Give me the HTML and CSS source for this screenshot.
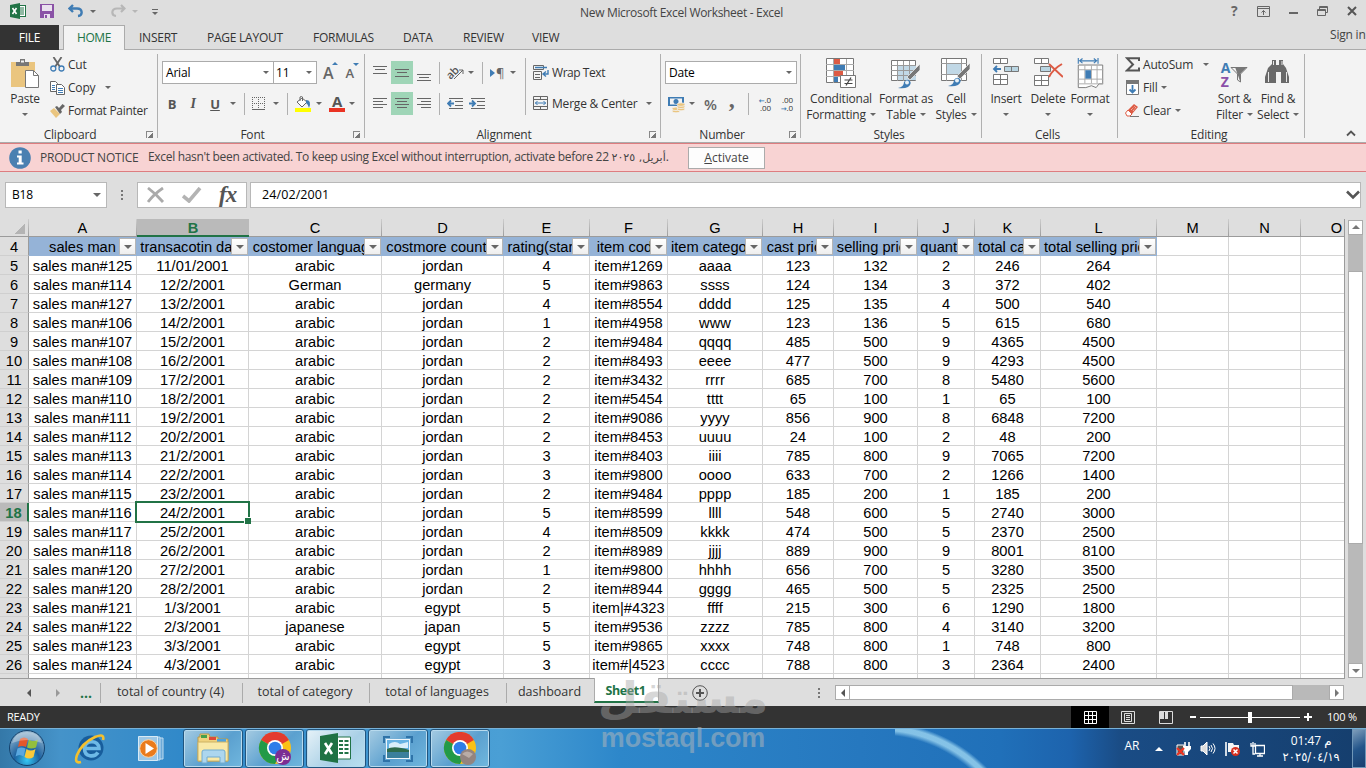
FILE: index.html
```html
<!doctype html>
<html lang="en">
  <head>
    <meta charset="UTF-8" />
    <meta name="viewport" content="width=device-width, initial-scale=1.0" />
    <title>New Microsoft Excel Worksheet - Excel</title>
    <link rel="stylesheet" href="styles.css">
  </head>
  <body>
    <div class="title-bar">
      <div class="quick-access">
        <svg class="qa-excel" width="16" height="16" viewBox="0 0 16 16">
          <rect x="8.5" y="2.5" width="7" height="11" fill="#fff" stroke="#217346" />
          <path d="M10 5h4M10 7h4M10 9h4M10 11h4" stroke="#217346" />
          <path d="M0 2l10-2v16L0 14z" fill="#217346" />
          <path d="M2.500 5l4 6M6.500 5l-4 6" stroke="#fff" stroke-width="1.6" />
        </svg>
        <svg class="qa-save" width="14" height="14" viewBox="0 0 14 14">
          <path d="M0 0h14v14H0z" fill="#8a52a6" />
          <path d="M2 1h10v6H2z" fill="#e9e1ee" />
          <path d="M4 10h6v4H4z" fill="#e9e1ee" />
          <path d="M5 11h2v3H5z" fill="#8a52a6" />
        </svg>
        <svg class="qa-undo" width="16" height="14" viewBox="0 0 16 14">
          <path d="M5 1L1.500 4.500L5 8M2 4.500h7c6 0 6 7 1 7.500" fill="none" stroke="#3f7cb4" stroke-width="2.400" />
        </svg>
        <i class="caret"></i>
        <svg class="qa-redo" width="16" height="14" viewBox="0 0 16 14">
          <path d="M11 1l3.500 3.500L11 8M14 4.500H7c-6 0-6 7-1 7.500" fill="none" stroke="#b7b7b7" stroke-width="2.200" />
        </svg>
        <i class="caret light"></i>
        <svg class="qa-more" width="6" height="7" viewBox="0 0 6 7">
          <path d="M0 .5h6" stroke="#666" />
          <path d="M0 3h6L3 6z" fill="#666" />
        </svg>
      </div>
      <div class="window-title">New Microsoft Excel Worksheet - Excel</div>
      <div class="window-buttons">
        <b>?</b>
        <svg width="13" height="11" viewBox="0 0 13 11" fill="none" stroke="#666">
          <path d="M.5.5h12v10H.5zM.5 2.500h12M6.500 9V4.500M4.500 6.500l2-2 2 2" />
        </svg>
        <svg width="9" height="11" viewBox="0 0 9 11"><path d="M0 7h9" stroke="#666" stroke-width="2" /></svg>
        <svg width="11" height="11" viewBox="0 0 11 11" fill="none" stroke="#666">
          <path d="M2.500 3V.5h8v6H8.500M.5 3.500h8v6h-8zM.5 4.500h8M2.500 1.500h8" />
        </svg>
        <svg width="10" height="10" viewBox="0 0 10 10"><path d="M1 1l8 8M9 1L1 9" stroke="#555" stroke-width="2" /></svg>
      </div>
    </div>

    <div class="tab-bar">
      <div class="tab file">FILE</div>
      <div class="tab active">HOME</div>
      <div class="tab insert">INSERT</div>
      <div class="tab layout">PAGE LAYOUT</div>
      <div class="tab formulas">FORMULAS</div>
      <div class="tab data">DATA</div>
      <div class="tab review">REVIEW</div>
      <div class="tab view">VIEW</div>
      <div class="sign-in">Sign in</div>
    </div>

    <div class="ribbon">
      <div class="group clipboard">
        <div class="group-body">
          <div class="big-button paste">
            <svg width="30" height="31" viewBox="0 0 30 31">
              <path d="M1 4h24v25H1z" fill="#eac57f" />
              <path d="M6 4h4V1h5v3h4v4H6z" fill="#777" />
              <path d="M11 2.500h3v2h-3z" fill="#f3f3f3" />
              <path d="M15.500 12.500h8l5 5v12h-13z" fill="#fff" stroke="#777" />
              <path d="M23.500 12.500v5h5" fill="none" stroke="#777" />
            </svg>
            <span>Paste</span>
            <i class="caret"></i>
          </div>
          <div class="stack">
            <div class="small-button">
              <svg width="15" height="15" viewBox="0 0 15 15" fill="none">
                <path d="M3.500 0L10 10M11.500 0L5 10" stroke="#666" stroke-width="1.800" />
                <circle cx="3.300" cy="11.500" r="2.500" stroke="#3f7cb4" stroke-width="1.300" />
                <circle cx="11.500" cy="11.500" r="2.500" stroke="#3f7cb4" stroke-width="1.300" />
              </svg>
              <span>Cut</span>
            </div>
            <div class="small-button">
              <svg width="15" height="14" viewBox="0 0 15 14">
                <path d="M.5.5h5l2 2v8h-7z" fill="#fff" stroke="#666" />
                <path d="M2 4.500h3M2 6.500h3M2 8.500h3" stroke="#3f7cb4" />
                <path d="M6.500 3.500h5l3 3v7h-8z" fill="#fff" stroke="#666" />
                <path d="M8 7.500h5M8 9.500h5M8 11.500h5" stroke="#3f7cb4" />
              </svg>
              <span class="copy-label">Copy</span><i class="caret"></i>
            </div>
            <div class="small-button">
              <svg width="15" height="14" viewBox="0 0 15 14">
                <path d="M0 7l4-3 6 6-4 4z" fill="#eac57f" />
                <path d="M5 3l2-1 2 2 3.500-4L15 2l-4 4 1 2-2 2z" fill="#666" />
              </svg>
              <span class="painter-label">Format Painter</span>
            </div>
          </div>
        </div>
        <div class="group-label"><span>Clipboard</span><i class="launcher"></i></div>
      </div>

      <div class="group font">
        <div class="group-body rows">
          <div class="tool-row">
            <div class="combo font-name"><span>Arial</span><i class="caret"></i></div>
            <div class="combo font-size"><span>11</span><i class="caret"></i></div>
            <div class="grow-font">A<i class="up"></i></div>
            <div class="shrink-font">A<i class="down"></i></div>
          </div>
          <div class="tool-row">
            <b class="tool bold">B</b>
            <b class="tool italic">I</b>
            <b class="tool underline">U</b>
            <i class="caret"></i>
            <i class="divider"></i>
            <svg class="borders" width="14" height="14" viewBox="0 0 14 14" stroke="#666" fill="none">
              <path d="M.5 0v13M6.500 0v13M12.500 0v13M0 .5h13M0 6.500h13" stroke-dasharray="1 1" />
              <path d="M0 12.500h13" />
            </svg>
            <i class="caret borders-caret"></i>
            <i class="divider"></i>
            <svg class="fill-color" width="17" height="16" viewBox="0 0 17 16">
              <path d="M2 6l5-4 5 4-5 5zM5 5V1q1.500-1 2.500 0v4" fill="#fff" stroke="#666" />
              <path d="M11 4q6 0 3 8-1-4-3-5z" fill="#3f7cb4" />
              <path d="M0 12h16v4H0z" fill="#ffff00" />
            </svg>
            <i class="caret"></i>
            <div class="font-color">A</div>
            <i class="caret"></i>
          </div>
        </div>
        <div class="group-label"><span>Font</span><i class="launcher"></i></div>
      </div>

      <div class="group alignment">
        <div class="group-body">
          <div class="align-left">
            <div class="tool-row">
              <i class="tool lines"><svg width="14" height="14" viewBox="0 0 14 14"><path d="M0 .5h14M2 3.500h10M0 7.500h14" /></svg></i>
              <i class="tool lines on"><svg width="14" height="14" viewBox="0 0 14 14"><path d="M0 3.500h14M2 6.500h10M0 10.500h14" /></svg></i>
              <i class="tool lines"><svg width="14" height="14" viewBox="0 0 14 14"><path d="M0 8.500h14M2 11.500h10M0 14.500h14" /></svg></i>
              <i class="divider"></i>
              <span class="orient">ab</span>
              <svg class="orient-arrow" width="10" height="14" viewBox="0 0 10 14" fill="none" stroke="#666"><path d="M0 13L9 4M5 4h4v4" /></svg>
              <i class="caret"></i>
              <i class="divider"></i>
              <span class="direction"><i></i>¶</span>
              <i class="caret"></i>
            </div>
            <div class="tool-row">
              <i class="tool lines"><svg width="14" height="14" viewBox="0 0 14 14"><path d="M0 1.500h14M0 4.500h10M0 7.500h14M0 10.500h10" /></svg></i>
              <i class="tool lines on"><svg width="14" height="14" viewBox="0 0 14 14"><path d="M0 1.500h14M2 4.500h10M0 7.500h14M2 10.500h10" /></svg></i>
              <i class="tool lines"><svg width="14" height="14" viewBox="0 0 14 14"><path d="M0 1.500h14M4 4.500h10M0 7.500h14M4 10.500h10" /></svg></i>
              <i class="divider"></i>
              <svg class="indent" width="16" height="11" viewBox="0 0 16 11">
                <path d="M2 .5h14M8 3.500h8M8 7.500h8M2 10.500h14" stroke="#666" />
                <path d="M7 5.500H1M4 2.500l-3 3 3 3" fill="none" stroke="#3f7cb4" stroke-width="1.800" />
              </svg>
              <svg class="indent" width="16" height="11" viewBox="0 0 16 11">
                <path d="M2 .5h14M8 3.500h8M8 7.500h8M2 10.500h14" stroke="#666" />
                <path d="M0 5.500h6M3 2.500l3 3-3 3" fill="none" stroke="#3f7cb4" stroke-width="1.800" />
              </svg>
            </div>
          </div>
          <div class="align-right">
            <div class="tool-row">
              <svg width="16" height="16" viewBox="0 0 16 16" fill="none" stroke="#666">
                <path d="M.5 4.500v-4h10v4zM.5 6.500h8v8h-8zM2 9.500h5M2 12.500h5" />
                <path d="M2 2.500h12M15 5v4h-4M13 6.500l-3 2.500 3 2.500" stroke="#3f7cb4" stroke-width="1.400" />
              </svg>
              <span class="wrap-label">Wrap Text</span>
            </div>
            <div class="tool-row">
              <svg width="16" height="15" viewBox="0 0 16 15" fill="none" stroke="#666">
                <path d="M.5.5h14v13H.5zM.5 3.500h14M.5 10.500h14M7.500 0v3M7.500 11v3" />
                <path d="M2 7h11M4.500 5L2.500 7l2 2M10.500 5l2 2-2 2" stroke="#3f7cb4" />
              </svg>
              <span class="merge-label">Merge &amp; Center</span><i class="caret"></i>
            </div>
          </div>
        </div>
        <div class="group-label"><span>Alignment</span><i class="launcher"></i></div>
      </div>

      <div class="group number">
        <div class="group-body rows">
          <div class="tool-row">
            <div class="combo number-format"><span>Date</span><i class="caret"></i></div>
          </div>
          <div class="tool-row">
            <svg class="money" width="17" height="16" viewBox="0 0 17 16">
              <path d="M0 0h16v9H0z" fill="#3f7cb4" />
              <path d="M2 1.500h12v6H2z" fill="#f3f3f3" />
              <circle cx="8" cy="4.500" r="2.500" fill="#3f7cb4" />
              <g fill="#eac57f" stroke="#f3f3f3" stroke-width=".8">
                <ellipse cx="8" cy="14" rx="4" ry="1.800" /><ellipse cx="8" cy="11.800" rx="4" ry="1.800" />
                <ellipse cx="13" cy="12" rx="4" ry="1.800" /><ellipse cx="13" cy="9.800" rx="4" ry="1.800" /><ellipse cx="13" cy="7.600" rx="4" ry="1.800" />
              </g>
            </svg>
            <i class="caret"></i>
            <span class="percent">%</span>
            <span class="comma">,</span>
            <i class="divider"></i>
            <div class="decimal more"><span><em>←</em>.0</span><span>.00</span></div>
            <div class="decimal less"><span>.00</span><span><em>→</em>.0</span></div>
          </div>
        </div>
        <div class="group-label"><span>Number</span><i class="launcher"></i></div>
      </div>

      <div class="group styles">
        <div class="group-body">
          <div class="big-button conditional">
            <svg width="30" height="31" viewBox="0 0 30 31">
              <path d="M.5.500h27v24H.5z" fill="#fff" stroke="#777" />
              <path d="M8 1h6v5H8zM8 13h9v5H8z" fill="#dd5b44" />
              <path d="M8 7h11v5H8zM8 19h4v5H8z" fill="#3f7cb4" />
              <path d="M7.500 1v24M20.500 1v24M0 6.500h28M0 12.500h28M0 18.500h28" stroke="#aaa" fill="none" />
              <path d="M14.500 17.500h15v12h-15z" fill="#fff" stroke="#777" />
              <path d="M18.500 22h8M18.500 25.500h8M25 19.500l-5 8" stroke="#444" stroke-width="1.200" />
            </svg>
            <span>Conditional</span>
            <span>Formatting<i class="caret"></i></span>
          </div>
          <div class="big-button format-table">
            <svg width="30" height="31" viewBox="0 0 30 31">
              <path d="M.5 2.500h24v20H.5z" fill="#fff" stroke="#777" />
              <path d="M7 8h18v14H7z" fill="#c1d8e6" />
              <path d="M6.500 3v20M12.500 3v20M18.500 3v20M0 7.500h25M0 12.500h25M0 17.500h25" stroke="#999" />
              <path d="M29 6v6l-10 10-3-3z" fill="#777" stroke="#f3f3f3" stroke-width=".7" />
              <path d="M7 30q6-1 6-6 3-4 6-1 2 3-2 6-4 2-10 1z" fill="#3f7cb4" />
              <circle cx="16" cy="24.500" r="2" fill="#e8f0f6" />
            </svg>
            <span>Format as</span>
            <span>Table<i class="caret"></i></span>
          </div>
          <div class="big-button cell-styles">
            <svg width="30" height="31" viewBox="0 0 30 31">
              <path d="M.5.500h25v22H.5z" fill="#fff" stroke="#777" />
              <path d="M5.500 1v22M20.500 1v22M0 5.500h26M0 16.500h26" stroke="#999" />
              <path d="M6 6h14v10H6z" fill="#c1d8e6" />
              <path d="M29 5v6l-10 10-3-3z" fill="#777" stroke="#f3f3f3" stroke-width=".7" />
              <path d="M7 28q6-1 6-6 3-4 6-1 2 3-2 6-4 2-10 1z" fill="#3f7cb4" />
              <circle cx="16" cy="22.500" r="2" fill="#e8f0f6" />
            </svg>
            <span>Cell</span>
            <span>Styles<i class="caret"></i></span>
          </div>
        </div>
        <div class="group-label"><span>Styles</span></div>
      </div>

      <div class="group cells">
        <div class="group-body">
          <div class="big-button">
            <svg width="28" height="31" viewBox="0 0 28 31">
              <path d="M1.500.500h14v5h-14zM8.500.500v5M1.500 16.500h14v10h-14zM8.500 16.500v10M1.500 21.500h14" fill="#fff" stroke="#777" />
              <path d="M12.500 8.500h14v5h-14zM19.500 8.500v5" fill="#b9d5e2" stroke="#777" />
              <path d="M9 11H2M5 8l-3 3 3 3" fill="none" stroke="#3f7cb4" stroke-width="1.800" />
            </svg>
            <span>Insert</span>
            <i class="caret"></i>
          </div>
          <div class="big-button">
            <svg width="30" height="31" viewBox="0 0 30 31">
              <path d="M1.500.500h14v5h-14zM8.500.500v5M1.500 17.500h14v10h-14zM8.500 17.500v10M1.500 22.500h14" fill="#fff" stroke="#777" />
              <path d="M7.500 8.500h10v5h-10z" fill="#b9d5e2" stroke="#777" />
              <path d="M16 6l14 13M29 6q-9 5-13 13" fill="none" stroke="#dd5b44" stroke-width="2" />
            </svg>
            <span>Delete</span>
            <i class="caret"></i>
          </div>
          <div class="big-button">
            <svg width="29" height="33" viewBox="0 0 29 33">
              <path d="M1.500 0v6M22.500 0v6M3 3h18M6 .500L3 3l3 2.500M18 .500L21 3l-3 2.500" fill="none" stroke="#3f7cb4" stroke-width="1.200" />
              <path d="M1.500 7.500h26v20h-4l-3 4-5-2-6 2h-8z" fill="#fff" stroke="#777" />
              <path d="M8.500 8v19M15.500 8v19M21.500 8v19M1 12.500h27M1 22.500h27M1 27.500h27" stroke="#aaa" />
              <path d="M9 13h6v9H9z" fill="#3f7cb4" />
            </svg>
            <span>Format</span>
            <i class="caret"></i>
          </div>
        </div>
        <div class="group-label"><span>Cells</span></div>
      </div>

      <div class="group editing">
        <div class="group-body">
          <div class="stack">
            <div class="small-button">
              <svg width="15" height="15" viewBox="0 0 15 15"><path d="M14 4V1.200H2L8 7.500 2 13.500h12V10.500" fill="none" stroke="#555" stroke-width="2" /></svg>
              <span class="autosum-label">AutoSum</span><i class="caret"></i>
            </div>
            <div class="small-button">
              <svg width="15" height="15" viewBox="0 0 15 15">
                <path d="M1.500.500h12v14h-12z" fill="#fff" stroke="#777" /><path d="M1 0h13v4H1z" fill="#777" />
                <path d="M7.500 5v8M4.500 9.500l3 3 3-3" fill="none" stroke="#3f7cb4" stroke-width="1.800" />
              </svg>
              <span>Fill</span><i class="caret"></i>
            </div>
            <div class="small-button">
              <svg width="15" height="14" viewBox="0 0 15 14">
                <path d="M5 12.500h9" stroke="#777" /><path d="M3 6l6-6 4 3-6 7z" fill="#dd5b44" /><path d="M3 6l4 4-2 2H2L.5 9z" fill="#fff" stroke="#dd5b44" />
                <path d="M6 6l4-4M8 7l3-4" stroke="#f6cfc7" stroke-dasharray="1 1" />
              </svg>
              <span>Clear</span><i class="caret"></i>
            </div>
          </div>
          <div class="big-button sort">
            <div class="sort-icon">
              <div class="az"><b>A</b><b>Z</b></div>
              <svg width="18" height="17" viewBox="0 0 18 17"><path d="M1 1.500h16L10.500 8v8l-3-2V8z" fill="#f3f3f3" stroke="#777" /><path d="M5 1h12l-7 7v7z" fill="#777" /></svg>
            </div>
            <span>Sort &amp;</span>
            <span>Filter<i class="caret"></i></span>
          </div>
          <div class="big-button find">
            <svg width="28" height="31" viewBox="0 0 28 31" fill="#6a6a6a">
              <path d="M8 2h4v5h3V2h4v4l3 4 3 9v6h-8V14h-5v11H1v-6l3-9 4-4z" />
              <path d="M4.500 14v10M22.500 14v10M9.500 3v4M18 3v4" stroke="#e8e8e8" />
            </svg>
            <span>Find &amp;</span>
            <span>Select<i class="caret"></i></span>
          </div>
        </div>
        <div class="group-label"><span>Editing</span></div>
      </div>
      <svg class="collapse" width="10" height="7" viewBox="0 0 10 7"><path d="M1 5.500l4-4 4 4" fill="none" stroke="#555" stroke-width="1.800" /></svg>
    </div>

    <div class="notice">
      <svg width="22" height="22" viewBox="0 0 22 22">
        <circle cx="11" cy="11" r="10.800" fill="#4a80b1" />
        <path d="M9.500 3.500h3.200v3H9.500zM8 8.500h4.700v7H14.500v2H8v-2h1.700v-5H8z" fill="#fff" />
      </svg>
      <span class="notice-title">PRODUCT NOTICE</span>
      <span class="notice-text">Excel hasn't been activated. To keep using Excel without interruption, activate before 22 <span class="arabic">أبريل, ٢٠٢٥</span>.</span>
      <button><u>A</u>ctivate</button>
    </div>

    <div class="formula-bar">
      <div class="name-box"><span>B18</span><i class="caret"></i></div>
      <div class="dots"><i></i><i></i><i></i></div>
      <div class="formula-buttons">
        <svg width="18" height="16" viewBox="0 0 18 16"><path d="M1 1q8 6 15 14M16 1Q7 7 1 15" fill="none" stroke="#aaa" stroke-width="2.800" /></svg>
        <svg width="20" height="16" viewBox="0 0 20 16"><path d="M1 9l6 5L18 1" fill="none" stroke="#b3b3b3" stroke-width="3.600" /></svg>
        <span class="fx">fx</span>
      </div>
      <div class="formula-input">
        <span>24/02/2001</span>
        <svg width="14" height="10" viewBox="0 0 14 10"><path d="M1 1.500l6 6 6-6" fill="none" stroke="#555" stroke-width="2.600" /></svg>
      </div>
    </div>

    <div class="sheet">
      <div class="grid" id="grid"></div>
      <div class="v-scroll">
        <div class="scroll-button"><i class="arrow-up"></i></div>
        <div class="v-thumb"></div>
        <div class="scroll-button"><i class="arrow-down"></i></div>
      </div>
    </div>

    <div class="sheet-tabs">
      <i class="arrow-left"></i>
      <i class="arrow-right"></i>
      <b class="more-sheets">...</b>
      <div class="sheet-tab country">total of country (4)</div>
      <div class="sheet-tab category">total of category</div>
      <div class="sheet-tab languages">total of languages</div>
      <div class="sheet-tab dashboard">dashboard</div>
      <div class="sheet-tab selected">Sheet1</div>
      <svg class="add-sheet" width="16" height="16" viewBox="0 0 16 16" fill="none" stroke="#555">
        <circle cx="8" cy="8" r="7.300" /><path d="M4 8h8M8 4v8" stroke-width="2" />
      </svg>
      <div class="dots"><i></i><i></i><i></i></div>
      <div class="h-scroll">
        <div class="scroll-button"><i class="arrow-left"></i></div>
        <div class="h-thumb"></div>
        <div class="scroll-button"><i class="arrow-right"></i></div>
      </div>
    </div>

    <div class="status-bar">
      <span class="ready">READY</span>
      <div class="view-button on"><svg width="13" height="13" viewBox="0 0 13 13" fill="none" stroke="#fff"><path d="M.5.500h12v12H.5zM4.500 0v13M8.500 0v13M0 4.500h13M0 8.500h13" /></svg></div>
      <div class="view-button"><svg width="14" height="13" viewBox="0 0 14 13" fill="none" stroke="#ddd"><path d="M.5.500h13v12H.5zM3.500 2.500h7v8h-7zM5 4.500h4M5 6.500h4M5 8.500h4" /></svg></div>
      <div class="view-button"><svg width="14" height="13" viewBox="0 0 14 13"><path d="M.5.500h13v12H.5z" fill="none" stroke="#ddd" /><path d="M1 1h4v7H1zM6 1h3v7H6z" fill="#ddd" /></svg></div>
      <i class="minus"></i>
      <div class="zoom-track"><i></i></div>
      <svg class="plus" width="8" height="8" viewBox="0 0 8 8"><path d="M0 4h8M4 0v8" stroke="#fff" stroke-width="2" /></svg>
      <span class="zoom-value">100 %</span>
    </div>

    <div class="taskbar">
      <svg class="start" width="38" height="38" viewBox="0 0 38 38">
        <defs>
          <radialGradient id="orb" cx=".5" cy=".85" r=".8">
            <stop offset="0" stop-color="#35c8f5" /><stop offset=".45" stop-color="#1d62a0" /><stop offset="1" stop-color="#8fb2cc" />
          </radialGradient>
        </defs>
        <circle cx="19" cy="19" r="17.500" fill="url(#orb)" stroke="#12406b" />
        <path d="M12 10q4-3 8 0l-2 8q-4-2-8 0z" fill="#e4572a" />
        <path d="M21 10.500q4 3 9 0l-2 8q-5 2-9 0z" fill="#93bf3e" />
        <path d="M9.500 19.500q4-2 8 0l-2 8q-4-3-8 0z" fill="#5aa7df" />
        <path d="M18.500 20q4 3 9 0l-2 8q-4 3-9 0z" fill="#f9c93a" />
        <path d="M4 14q3-11 15-11t15 11q-15-6-30 0z" fill="#fff" opacity=".3" />
      </svg>
      <svg class="ie" width="34" height="34" viewBox="0 0 34 34" fill="none">
        <circle cx="18" cy="17" r="12.500" fill="#175d9c" />
        <path d="M11 17.500h15c0-9-14-9-14.500 0 0 9 10 9 13.500 4" stroke="#6db9e6" stroke-width="3.600" />
        <path d="M30 9q2-7-8-3Q9 12 4 24q-3 9 4 7" stroke="#f3c02f" stroke-width="2.600" />
      </svg>
      <svg class="wmp" width="28" height="26" viewBox="0 0 28 26">
        <path d="M7 2h18v21H7z" fill="#6ba9d8" stroke="#bfdcf0" /><path d="M4 1h18v23H4z" fill="#7cb4de" stroke="#bfdcf0" />
        <path d="M.5.500h19v24H.5z" fill="#9cc7e6" stroke="#d7eaf6" />
        <circle cx="10.500" cy="12.500" r="8.800" fill="#ea7b1c" stroke="#f9d3a6" /><path d="M7.500 7l8.500 5.500L7.500 18z" fill="#fff" />
      </svg>
      <div class="task explorer">
        <svg width="34" height="32" viewBox="0 0 34 32">
          <path d="M2 4h2V1h9l1 3h8v2h10v22H2z" fill="#f0d27d" stroke="#b99a4b" />
          <path d="M5 2h6v3H5z" fill="#46a04a" /><path d="M13 4h7v3h-7z" fill="#dd4a38" /><path d="M21 6h9v3h-9z" fill="#4ea3dd" />
          <path d="M2 9h30v19H2z" fill="#f9e9a7" stroke="#cdb264" />
          <path d="M6 30V19q0-2 2-2h19q2 0 2 2v11h-5v-6H11v6z" fill="#acd6ee" stroke="#72acd0" />
        </svg>
      </div>
      <div class="task">
        <svg width="34" height="34" viewBox="0 0 34 34">
          <circle cx="17" cy="16" r="16" fill="#fbc116" />
          <path d="M17 16L3.100 8A16 16 0 0 1 30.900 8z" fill="#e33b2e" />
          <path d="M17 16L3.100 8A16 16 0 0 0 17 32l6-11z" fill="#229a48" />
          <circle cx="17" cy="16" r="8" fill="#fff" /><circle cx="17" cy="16" r="6.300" fill="#2f7de9" />
          <circle cx="25" cy="25" r="8" fill="#7b2d93" />
          <text x="25" y="28" class="profile-letter">ش</text>
        </svg>
      </div>
      <div class="task current">
        <svg width="32" height="32" viewBox="0 0 32 32">
          <path d="M16 4h14.500v22H16z" fill="#fff" stroke="#217346" />
          <path d="M19 8h4M19 12h4M19 16h4M19 20h4M24.500 8h4M24.500 12h4M24.500 16h4M24.500 20h4" stroke="#217346" stroke-width="2" />
          <path d="M0 3l18-3v30L0 27z" fill="#1f7244" /><path d="M5 10l7 11M12 10L5 21" stroke="#fff" stroke-width="2.600" />
        </svg>
      </div>
      <div class="task">
        <svg width="30" height="26" viewBox="0 0 30 26">
          <path d="M1 7V1h6M23 1h6v6M29 19v6h-6M7 25H1v-6" fill="none" stroke="#2f73a8" stroke-width="2" />
          <path d="M3 3h24v20H3z" fill="#eef5fa" /><path d="M4 4h22v10H4z" fill="#67b2e3" /><path d="M6 8q6-4 11 0l8-2v6H6z" fill="#d9eefa" />
          <path d="M4 13q7-4 22 1v4H4z" fill="#2e6b4c" /><path d="M4 16h22v6H4z" fill="#3b7f9c" />
        </svg>
      </div>
      <div class="task">
        <svg width="34" height="34" viewBox="0 0 34 34">
          <circle cx="17" cy="16" r="16" fill="#fbc116" />
          <path d="M17 16L3.100 8A16 16 0 0 1 30.900 8z" fill="#e33b2e" />
          <path d="M17 16L3.100 8A16 16 0 0 0 17 32l6-11z" fill="#229a48" />
          <circle cx="17" cy="16" r="8" fill="#fff" /><circle cx="17" cy="16" r="6.300" fill="#2f7de9" />
          <circle cx="25" cy="25" r="8" fill="#93847f" /><path d="M19 22q5-5 11 0l-4 4z" fill="#b9aca6" />
        </svg>
      </div>
      <span class="language">AR</span>
      <i class="tray-arrow"></i>
      <div class="tray">
        <svg width="15" height="16" viewBox="0 0 15 16">
          <path d="M1 4h7v10H1z" fill="#555" stroke="#fff" /><path d="M9 1v4M13 1v4" stroke="#fff" stroke-width="1.600" /><path d="M7 5h8v3l-3 3v3H9v-3L7 8z" fill="#fff" />
          <path d="M1 7l7 7M8 7l-7 7" stroke="#e32" stroke-width="2.200" />
        </svg>
        <svg width="16" height="16" viewBox="0 0 16 16" fill="none" stroke="#fff">
          <path d="M1 5h2l4-4v13l-4-4H1z" fill="#ddd" /><path d="M9 5q2 2.500 0 5M11 4q3 3.500 0 7M13 2.500q4 5 0 10" />
        </svg>
        <svg width="16" height="16" viewBox="0 0 16 16">
          <path d="M1 1v14" stroke="#fff" stroke-width="1.600" /><path d="M3 2h5l1 2h5v7H3z" fill="#f5f5f5" />
          <circle cx="10.500" cy="10.500" r="4.500" fill="#d8301f" /><path d="M8.500 8.500l4 4M12.500 8.500l-4 4" stroke="#fff" stroke-width="1.500" />
        </svg>
        <svg width="15" height="15" viewBox="0 0 15 15" fill="none" stroke="#fff">
          <path d="M5.500 3.500h9v8h-9zM7 14h6M10 12v2" stroke-width="1.300" /><path d="M1 1v3h4V1M3 0v12h2" stroke-width="1.300" />
        </svg>
      </div>
      <div class="clock"><span>01:47 م</span><span class="arabic">٢٠٢٥/٠٤/١٩</span></div>
      <div class="show-desktop"></div>
    </div>

    <div class="watermark">
      <span class="mark-ar" lang="ar">مستقل</span>
      <span class="mark-en">mostaql.com</span>
    </div>

    <script src="script.js"></script>
  </body>
</html>
```
FILE: styles.css
```css
* {
  box-sizing: border-box;
}

body {
  width: 1366px;
  height: 768px;
  margin: 0;
  overflow: hidden;
  position: relative;
  background: #dedede;
  color: #333;
  font-family: "Open Sans", "Noto Sans", "DejaVu Sans", sans-serif;
  font-size: 12px;
  line-height: 16px;
  letter-spacing: -0.2px;
  white-space: nowrap;
}

svg {
  display: block;
  flex: none;
}

.arabic {
  font-family: "DejaVu Sans", sans-serif;
  font-size: 11px;
}

.caret {
  flex: none;
  width: 0;
  height: 0;
  border: 3px solid transparent;
  border-top-color: #666;
  border-bottom: 0;
}

.caret.light {
  border-top-color: #b7b7b7;
}

/* title bar */

.title-bar {
  display: flex;
  height: 25px;
}

.quick-access {
  display: flex;
  align-items: center;
  width: 580px;
  height: 22px;
  padding-left: 10px;
}

.qa-save {
  margin-left: 14px;
}

.qa-undo {
  margin: 0 6px 0 14px;
}

.qa-redo {
  margin: 0 6px 0 14px;
}

.qa-more {
  margin: 3px 0 0 14px;
}

.window-title {
  width: 640px;
  padding-top: 5px;
  color: #444;
  letter-spacing: -0.32px;
}

.window-buttons {
  display: flex;
  align-items: center;
  gap: 19px;
  height: 22px;
  padding-left: 11px;
  color: #666;
}

.window-buttons b {
  width: 7px;
  font-size: 14px;
}

.tab-bar {
  display: flex;
  height: 25px;
  border-bottom: 1px solid #ababab;
  line-height: 25px;
  letter-spacing: -0.25px;
}

.tab.file {
  width: 59px;
  height: 25px;
  background: #333;
  color: #fff;
  text-align: center;
}

.tab.active {
  width: 62px;
  height: 25px;
  margin-left: 4px;
  border: 1px solid #ababab;
  border-bottom: 0;
  background: #f3f3f3;
  color: #217346;
  text-align: center;
  line-height: 24px;
  letter-spacing: -0.4px;
}

.tab.insert {
  width: 67px;
  padding-left: 14px;
}

.tab.layout {
  width: 106px;
  padding-left: 15px;
}

.tab.formulas {
  width: 90px;
  padding-left: 15px;
}

.tab.data {
  width: 60px;
  padding-left: 15px;
}

.tab.review {
  width: 69px;
  padding-left: 15px;
}

.tab.view {
  width: 813px;
  padding-left: 15px;
}

.sign-in {
  line-height: 20px;
  color: #444;
  letter-spacing: -0.2px;
}

/* ribbon */

.ribbon {
  display: flex;
  height: 93px;
  border-bottom: 1px solid #ababab;
  background: #f3f3f3;
}

.group {
  height: 84px;
  margin-top: 4px;
  border-right: 1px solid #b0b0b0;
}

.group-body {
  display: flex;
  height: 72px;
}

.group-body.rows {
  display: block;
}

.group-label {
  display: flex;
  align-items: center;
  height: 17px;
  padding-right: 4px;
}

.group-label span {
  flex: 1;
  padding-right: 6px;
  text-align: center;
}

.launcher {
  width: 7px;
  height: 7px;
  border: 1px solid #888;
  border-width: 1px 0 0 1px;
  background: linear-gradient(135deg, transparent 55%, #777 55%);
}

.clipboard {
  width: 158px;
}

.font {
  width: 207px;
}

.alignment {
  width: 296px;
}

.number {
  width: 140px;
}

.styles {
  width: 181px;
}

.styles .group-label span,
.cells .group-label span,
.editing .group-label span {
  padding-right: 0;
}

.cells {
  width: 136px;
}

.editing {
  width: 187px;
}

.big-button {
  display: flex;
  flex-direction: column;
  align-items: center;
  padding-top: 4px;
}

.big-button > svg {
  height: 31px;
  margin-bottom: 2px;
}

.big-button > .caret {
  margin-top: 6px;
}

.big-button span .caret {
  display: inline-block;
  margin: 0 0 3px 4px;
}

.paste {
  width: 50px;
}

.stack {
  display: flex;
  flex-direction: column;
  margin-top: -1px;
}

.small-button {
  display: flex;
  align-items: center;
  height: 23px;
}

.small-button span {
  margin: 0 5px 0 3px;
}

.clipboard .small-button .caret {
  margin-left: 5px;
}

.painter-label {
  letter-spacing: -0.3px;
}

.tool-row {
  display: flex;
  align-items: center;
  height: 25px;
}

.rows .tool-row:first-child,
.align-left .tool-row:first-child,
.align-right .tool-row:first-child {
  height: 37px;
}

.rows .tool-row,
.align-left {
  padding-left: 4px;
}

.combo {
  display: flex;
  align-items: center;
  justify-content: space-between;
  height: 23px;
  padding: 0 4px 0 3px;
  border: 1px solid #ababab;
  background: #fff;
  color: #000;
}

.font-name {
  width: 112px;
}

.font-size {
  width: 44px;
  margin-left: -1px;
  padding-left: 2px;
}

.number-format {
  width: 132px;
}

.grow-font,
.shrink-font {
  position: relative;
  margin-left: 6px;
  color: #666;
  font-size: 16px;
  font-weight: 600;
}

.shrink-font {
  margin-left: 12px;
  font-size: 13px;
}

.grow-font i,
.shrink-font i {
  position: absolute;
  top: -2px;
  right: -5px;
  border: 3px solid transparent;
}

.grow-font .up {
  top: -6px;
  border-bottom-color: #3f7cb4;
}

.shrink-font .down {
  border-top-color: #3f7cb4;
}

.font b.tool {
  width: 22px;
  color: #555;
  font-size: 13px;
  text-align: center;
}

.font b.bold {
  width: 20px;
}

.font b.italic {
  font-family: "Liberation Serif", serif;
  font-size: 14px;
  font-style: italic;
}

.underline {
  text-decoration: underline;
}

.font .caret {
  margin-left: 4px;
}

.font .combo .caret {
  margin-left: 0;
}

.font .borders-caret {
  margin-left: 7px;
}

.divider {
  flex: none;
  width: 1px;
  height: 22px;
  margin: 0 7px 0 8px;
  background: #b0b0b0;
}

.font-color {
  width: 16px;
  height: 16px;
  margin-left: 7px;
  border-bottom: 4px solid #ea3323;
  color: #555;
  font-size: 15px;
  font-weight: 700;
  line-height: 11px;
  text-align: center;
}

.align-left {
  width: 160px;
  height: 62px;
}

.lines {
  display: flex;
  align-items: center;
  justify-content: center;
  width: 22px;
  height: 23px;
}

.lines svg {
  overflow: visible;
}

.lines path {
  stroke: #666;
}

.lines.on {
  background: #9fd5b7;
}

.align-left .lines + .divider {
  margin-left: 4px;
}

.orient {
  width: 12px;
  margin-left: -1px;
  color: #555;
  font-size: 11px;
  font-weight: 600;
  transform: rotate(-45deg);
}

.orient-arrow {
  margin: 0 4px 0 -4px;
}

.direction {
  display: flex;
  align-items: center;
  gap: 1px;
  margin-right: 6px;
  color: #666;
  font-size: 13px;
}

.direction i {
  border: 4px solid transparent;
  border-left: 5px solid #3f7cb4;
  border-right: 0;
}

.indent + .indent {
  margin-left: 6px;
}

.align-right {
  width: 135px;
  height: 57px;
  margin-top: 4px;
  padding-left: 7px;
  border-left: 1px solid #b0b0b0;
}

.align-right .tool-row {
  margin-top: -4px;
}

.align-right .tool-row + .tool-row {
  margin-top: 0;
}

.align-right span {
  margin-left: 3px;
}

.align-right .wrap-label {
  letter-spacing: -0.45px;
}

.align-right .caret {
  margin-left: 9px;
}

.money {
  margin: 2px 4px 0 3px;
}

.percent {
  margin-left: 9px;
  color: #666;
  font-size: 15px;
  font-weight: 600;
}

.comma {
  width: 6px;
  margin: -10px 5px 0 12px;
  color: #666;
  font-family: "Liberation Serif", serif;
  font-size: 24px;
  font-weight: 700;
}

.decimal {
  width: 15px;
  font-size: 8px;
  line-height: 8px;
  text-align: right;
}

.decimal span {
  display: block;
  height: 8px;
  letter-spacing: -0.2px;
}

.decimal em {
  color: #3f7cb4;
  font-family: "DejaVu Sans", sans-serif;
  font-size: 7px;
  font-style: normal;
  font-weight: 700;
  line-height: 6px;
}

.decimal.less {
  margin-left: 7px;
}

.conditional {
  width: 80px;
}

.format-table {
  width: 50px;
}

.cell-styles {
  width: 50px;
}

.cells .group-body {
  padding-left: 3px;
}

.cells .big-button {
  width: 42px;
}

.editing .stack {
  width: 93px;
  padding-left: 7px;
}

.editing .stack .caret {
  margin-left: -1px;
}

.editing .autosum-label + .caret {
  margin-left: 5px;
}

.sort {
  width: 47px;
}

.find {
  width: 40px;
}

.sort-icon {
  display: flex;
  align-items: center;
  height: 33px;
}

.az {
  display: flex;
  flex-direction: column;
  color: #3f7cb4;
  font-size: 14px;
  line-height: 14px;
}

.az b + b {
  color: #8b4fa8;
}

.collapse {
  align-self: flex-end;
  margin: 0 0 5px 41px;
}

/* activation notice */

.notice {
  display: flex;
  align-items: center;
  height: 29px;
  padding-left: 9px;
  border: 1px solid #dd7d80;
  border-width: 1px 0;
  background: #f8d3d3;
  color: #444;
}

.notice-title {
  width: 108px;
  margin-left: 9px;
  letter-spacing: -0.2px;
}

.notice-text {
  width: 540px;
  letter-spacing: -0.32px;
}

.notice button {
  width: 77px;
  height: 22px;
  padding: 0;
  border: 1px solid #ababab;
  background: #fdfdfd;
  color: #444;
  font: inherit;
}

/* formula bar */

.formula-bar {
  display: flex;
  height: 47px;
  padding: 10px 0 11px 5px;
  color: #000;
}

.name-box,
.formula-buttons,
.formula-input {
  display: flex;
  align-items: center;
  height: 26px;
  border: 1px solid #b8b8b8;
  background: #fff;
}

.name-box {
  justify-content: space-between;
  width: 102px;
  padding: 0 5px 0 6px;
}

.name-box .caret {
  border-width: 4px 4px 0;
}

.dots {
  display: flex;
  flex-direction: column;
  justify-content: center;
  gap: 2px;
  width: 30px;
  padding-left: 14px;
}

.dots i {
  width: 2px;
  height: 2px;
  background: #777;
}

.formula-buttons {
  width: 110px;
  gap: 17px;
  padding-left: 9px;
}

.fx {
  color: #555;
  font: italic bold 23px/22px "Liberation Serif", serif;
  letter-spacing: -1px;
}

.formula-input {
  justify-content: space-between;
  width: 1111px;
  margin-left: 3px;
  padding: 0 0 0 11px;
  font-size: 12.500px;
  letter-spacing: 0.1px;
}

/* worksheet */

.sheet {
  display: flex;
  height: 460px;
}

.grid {
  width: 1345px;
  height: 460px;
  overflow: hidden;
  border-right: 1px solid #9b9b9b;
  border-bottom: 1px solid #9b9b9b;
  color: #000;
  font: 14.67px/20px "Liberation Sans", Arial, sans-serif;
  letter-spacing: 0;
  text-align: center;
}

.grid-row {
  display: grid;
  grid-template-columns: 29px 108px 112px 133px 122px 86px 78px 95px 71px 84px 57px 66px 116px 72px 72px 72px;
  grid-template-rows: 19px;
  width: 1373px;
  height: 19px;
}

.column-head {
  grid-template-rows: 17px;
  height: 18px;
  border-bottom: 1px solid #9b9b9b;
  background: #dedede;
  line-height: 19px;
}

.column-head .head {
  border-right: 1px solid;
  border-image: linear-gradient(#d0d0d0, #9b9b9b) 1;
}

.column-head .corner {
  padding: 4px 3px 0 14px;
}

.column-head .corner::after {
  content: "";
  display: block;
  width: 11px;
  height: 11px;
  background: linear-gradient(135deg, transparent 50%, #b4b4b4 50%);
}

.column-head .picked {
  position: relative;
  height: 18px;
  border-right: 0;
  border-bottom: 2px solid #217346;
  border-image: none;
  background: #bababa;
  color: #217346;
  font-weight: 700;
}

.row-head {
  border-right: 1px solid #9b9b9b;
  border-bottom: 1px solid #cfcfcf;
  background: #dedede;
}

.row-head.picked {
  border-right: 2px solid #217346;
  background: #bababa;
  color: #217346;
  font-weight: 700;
}

.cell {
  display: flex;
  justify-content: center;
  min-width: 0;
  border-right: 1px solid #d4d4d4;
  border-bottom: 1px solid #d4d4d4;
  background: #fff;
}

.field {
  position: relative;
  overflow: hidden;
  border-color: #95b3d7;
  background: #95b3d7;
}

.filter {
  position: absolute;
  top: 1px;
  right: 0;
  display: flex;
  align-items: center;
  justify-content: center;
  width: 17px;
  height: 17px;
  border: 1px solid #b5b5b5;
  background: linear-gradient(#fff, #eee);
}

.filter .caret {
  border-width: 4px 4px 0;
}

.cell.active {
  position: relative;
}

.cell.active::before {
  content: "";
  position: absolute;
  z-index: 1;
  inset: -2px -2px -2px -2px;
  border: 2px solid #217346;
}

.cell.active::after {
  content: "";
  position: absolute;
  z-index: 2;
  right: -3px;
  bottom: -3px;
  width: 6px;
  height: 6px;
  border: 1px solid #fff;
  border-width: 1px 0 0 1px;
  background: #217346;
}

.v-scroll {
  display: flex;
  flex-direction: column;
  width: 15px;
  height: 458px;
  margin: 1px 0 0 3px;
  background: #b9b9b9;
}

.scroll-button {
  display: flex;
  align-items: center;
  justify-content: center;
  width: 15px;
  height: 15px;
  border: 1px solid #ababab;
  background: #fff;
}

.v-thumb {
  height: 274px;
  margin: 36px 0 119px;
  border: 1px solid #ababab;
  background: #fff;
}

.arrow-up,
.arrow-down,
.arrow-left,
.arrow-right {
  border: 4px solid transparent;
}

.arrow-up {
  border-top: 0;
  border-bottom-color: #777;
}

.arrow-down {
  border-bottom: 0;
  border-top-color: #777;
}

.arrow-left {
  border-left: 0;
  border-right-color: #555;
}

.arrow-right {
  border-right: 0;
  border-left-color: #777;
}

/* sheet tabs */

.sheet-tabs {
  display: flex;
  align-items: center;
  height: 27px;
  padding-left: 27px;
  color: #333;
  font-size: 12.500px;
  letter-spacing: 0;
}

.sheet-tabs > .arrow-right {
  margin-left: 25px;
  border-left-color: #999;
}

.more-sheets {
  width: 20px;
  margin-left: 20px;
  color: #217346;
  font-size: 14px;
}

.sheet-tab {
  height: 20px;
  padding-right: 2px;
  border-left: 1px solid #ababab;
  line-height: 18px;
  text-align: center;
}

.country {
  width: 142px;
}

.category {
  width: 127px;
}

.languages {
  width: 137px;
}

.dashboard {
  width: 88px;
}

.selected {
  align-self: flex-start;
  width: 65px;
  height: 25px;
  margin-top: -1px;
  border-right: 1px solid #ababab;
  border-bottom: 2px solid #217346;
  background: #fff;
  color: #217346;
  font-weight: 700;
  letter-spacing: -0.4px;
  line-height: 26px;
}

.add-sheet {
  margin-left: 33px;
}

.sheet-tabs .dots {
  width: 17px;
  margin-left: 110px;
  padding: 0;
}

.h-scroll {
  display: flex;
  width: 509px;
  height: 15px;
  background: #b9b9b9;
}

.h-thumb {
  width: 443px;
  margin-right: 36px;
  border: 1px solid #ababab;
  border-left: 0;
  background: #fff;
}

/* status bar */

.status-bar {
  display: flex;
  align-items: center;
  height: 22px;
  background: #333;
  color: #fff;
  font-size: 11px;
}

.ready {
  width: 1071px;
  padding-left: 7px;
  letter-spacing: -0.3px;
}

.view-button {
  display: flex;
  align-items: center;
  justify-content: center;
  width: 38px;
  height: 22px;
}

.view-button.on {
  background: #000;
}

.minus {
  width: 6px;
  height: 2px;
  margin: 0 4px 0 5px;
  background: #fff;
}

.zoom-track {
  display: flex;
  align-items: center;
  justify-content: center;
  width: 100px;
  height: 1px;
  background: #fff;
}

.zoom-track i {
  width: 4px;
  height: 11px;
  background: #fff;
}

.plus {
  margin: 0 15px 0 4px;
}

/* taskbar */

.taskbar {
  display: flex;
  height: 40px;
  border-top: 1px solid #78b1d7;
  background:
    radial-gradient(circle at -16px 144px, transparent 138px, rgba(150, 208, 238, 0.850) 143px, rgba(150, 208, 238, 0.850) 147px, transparent 151px) 895px 0 / 110px 40px no-repeat,
    linear-gradient(90deg, #3478a8 0, #4593c9 60px, #3189c9 180px, #4a9fd5 500px, #2d87ca 620px, #2678bf 860px, #2070b9 1000px, #1d63ad 1070px, #1a4c85 1120px, #153e6d 1366px);
  color: #fff;
}

.start {
  margin-left: 8px;
}

.ie {
  margin: 2px 0 0 27px;
}

.wmp {
  margin: 7px 0 0 31px;
}

.task {
  display: flex;
  align-items: center;
  justify-content: center;
  width: 60px;
  height: 39px;
  margin-right: 2px;
  border: 1px solid #20557f;
  border-radius: 3px;
  background: linear-gradient(135deg, #a5cbe2, #5ba0cf 55%, #70b7de);
  box-shadow: inset 0 0 0 1px #b7daee;
}

.explorer {
  margin-left: 17px;
}

.task.current {
  background: linear-gradient(135deg, #e6f2f8, #a9d0e6 60%, #b9e0f0);
}

.profile-letter {
  fill: #fff;
  font: 11px "DejaVu Sans", sans-serif;
  text-anchor: middle;
}

.language {
  width: 31px;
  margin: 9px 0 0 633px;
}

.tray-arrow {
  height: 4px;
  margin-top: 18px;
  border: 4px solid transparent;
  border-top: 0;
  border-bottom-color: #fff;
}

.tray {
  display: flex;
  align-items: center;
  gap: 9px;
  height: 40px;
  padding-left: 13px;
}

.clock {
  display: flex;
  flex-direction: column;
  align-items: center;
  width: 62px;
  margin-left: 15px;
  padding-top: 4px;
}

.clock .arabic {
  font-size: 11.500px;
}

.show-desktop {
  width: 14px;
  height: 39px;
  margin-left: 10px;
  border: 1px solid #6f97b8;
  background: linear-gradient(150deg, #7e9dba, #23558a 50%, #173f6f);
}

/* overlay mark */

.watermark {
  position: absolute;
  top: 672px;
  left: 600px;
  width: 166px;
  height: 80px;
  color: rgba(165, 165, 165, 0.450);
  text-align: center;
}

.mark-ar {
  display: block;
  height: 52px;
  font: bold 44px/52px "DejaVu Sans", sans-serif;
  letter-spacing: 0;
  transform: scaleX(1.06);
}

.mark-en {
  display: block;
  color: rgba(185, 185, 185, 0.500);
  font: bold 27px/28px "Liberation Sans", Arial, sans-serif;
  letter-spacing: -0.2px;
}
```
FILE: script.js
```js
const letters = ["A", "B", "C", "D", "E", "F", "G", "H", "I", "J", "K", "L", "M", "N", "O"];

const fields = [
  "sales man", "transacotin date", "costomer language", "costmore country",
  "rating(stars)", "item code", "item category", "cast price",
  "selling price", "quantity", "total cast", "total selling price",
];

const records = [
  "sales man#125,11/01/2001,arabic,jordan,4,item#1269,aaaa,123,132,2,246,264",
  "sales man#114,12/2/2001,German,germany,5,item#9863,ssss,124,134,3,372,402",
  "sales man#127,13/2/2001,arabic,jordan,4,item#8554,dddd,125,135,4,500,540",
  "sales man#106,14/2/2001,arabic,jordan,1,item#4958,www,123,136,5,615,680",
  "sales man#107,15/2/2001,arabic,jordan,2,item#9484,qqqq,485,500,9,4365,4500",
  "sales man#108,16/2/2001,arabic,jordan,2,item#8493,eeee,477,500,9,4293,4500",
  "sales man#109,17/2/2001,arabic,jordan,2,item#3432,rrrr,685,700,8,5480,5600",
  "sales man#110,18/2/2001,arabic,jordan,2,item#5454,tttt,65,100,1,65,100",
  "sales man#111,19/2/2001,arabic,jordan,2,item#9086,yyyy,856,900,8,6848,7200",
  "sales man#112,20/2/2001,arabic,jordan,2,item#8453,uuuu,24,100,2,48,200",
  "sales man#113,21/2/2001,arabic,jordan,3,item#8403,iiii,785,800,9,7065,7200",
  "sales man#114,22/2/2001,arabic,jordan,3,item#9800,oooo,633,700,2,1266,1400",
  "sales man#115,23/2/2001,arabic,jordan,2,item#9484,pppp,185,200,1,185,200",
  "sales man#116,24/2/2001,arabic,jordan,5,item#8599,llll,548,600,5,2740,3000",
  "sales man#117,25/2/2001,arabic,jordan,4,item#8509,kkkk,474,500,5,2370,2500",
  "sales man#118,26/2/2001,arabic,jordan,2,item#8989,jjjj,889,900,9,8001,8100",
  "sales man#120,27/2/2001,arabic,jordan,1,item#9800,hhhh,656,700,5,3280,3500",
  "sales man#120,28/2/2001,arabic,jordan,2,item#8944,gggg,465,500,5,2325,2500",
  "sales man#121,1/3/2001,arabic,egypt,5,item|#4323,ffff,215,300,6,1290,1800",
  "sales man#122,2/3/2001,japanese,japan,5,item#9536,zzzz,785,800,4,3140,3200",
  "sales man#123,3/3/2001,arabic,egypt,5,item#9865,xxxx,748,800,1,748,800",
  "sales man#124,4/3/2001,arabic,egypt,3,item#|4523,cccc,788,800,3,2364,2400",
];

const activeRow = 18;
const activeColumn = 1;

function row(content, className = "") {
  return `<div class="grid-row ${className}">${content}</div>`;
}

const heads = letters
  .map((letter, i) => `<div class="head ${i === activeColumn ? "picked" : ""}">${letter}</div>`)
  .join("");
let html = row(`<div class="head corner"></div>${heads}`, "column-head");

const fieldCells = letters
  .map((_, i) =>
    fields[i]
      ? `<div class="cell field">${fields[i]}<span class="filter"><i class="caret"></i></span></div>`
      : `<div class="cell"></div>`,
  )
  .join("");
html += row(`<div class="row-head">4</div>${fieldCells}`);

records.forEach((record, index) => {
  const number = index + 5;
  const values = record.split(",");
  const cells = letters
    .map((_, i) => {
      const active = number === activeRow && i === activeColumn;
      return `<div class="cell ${active ? "active" : ""}">${values[i] || ""}</div>`;
    })
    .join("");
  html += row(`<div class="row-head ${number === activeRow ? "picked" : ""}">${number}</div>${cells}`);
});

// top edge of the row cut off by the bottom of the window
html += row(`<div class="row-head"></div>${letters.map(() => `<div class="cell"></div>`).join("")}`);

document.getElementById("grid").innerHTML = html;
```
